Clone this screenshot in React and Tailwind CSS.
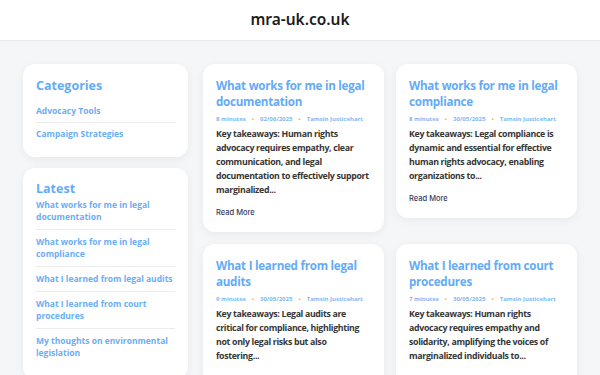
const categories = ['Advocacy Tools', 'Campaign Strategies']

const latest = [
  'What works for me in legal documentation',
  'What works for me in legal compliance',
  'What I learned from legal audits',
  'What I learned from court procedures',
  'My thoughts on environmental legislation',
]

const posts = [
  {
    title: 'What works for me in legal documentation',
    time: '8 minutes',
    date: '02/06/2025',
    excerpt:
      'Key takeaways: Human rights advocacy requires empathy, clear communication, and legal documentation to effectively support marginalized...',
  },
  {
    title: 'What works for me in legal compliance',
    time: '8 minutes',
    date: '30/05/2025',
    excerpt:
      'Key takeaways: Legal compliance is dynamic and essential for effective human rights advocacy, enabling organizations to...',
  },
  {
    title: 'What I learned from legal audits',
    time: '9 minutes',
    date: '30/05/2025',
    excerpt:
      'Key takeaways: Legal audits are critical for compliance, highlighting not only legal risks but also fostering...',
  },
  {
    title: 'What I learned from court procedures',
    time: '7 minutes',
    date: '30/05/2025',
    excerpt:
      'Key takeaways: Human rights advocacy requires empathy and solidarity, amplifying the voices of marginalized individuals to...',
  },
]

function PostCard({ post }) {
  return (
    <article className="bg-white rounded-[12px] shadow-[0_2px_10px_rgba(0,0,0,0.06)] px-[13px] pt-[14px] pb-[14px]">
      <h2 className="text-[11.6px] leading-[16px] font-bold tracking-[-0.25px] text-[#64abf7]">{post.title}</h2>
      <div className="mt-[5px] flex items-center gap-[6px] whitespace-nowrap text-[6px] font-bold text-[#7fb8f5]">
        <span>{post.time}</span>
        <span className="text-[#f5b942]">•</span>
        <span>{post.date}</span>
        <span className="text-[#f5b942]">•</span>
        <span>Tamsin Justicehart</span>
      </div>
      <p className="mt-[3px] text-[8.8px] leading-[14px] font-bold tracking-[-0.33px] text-[#363636]">{post.excerpt}</p>
      <a className="block mt-[10px] text-[7.5px] font-medium text-[#3a3a5e] font-['Inter',sans-serif]">Read More</a>
    </article>
  )
}

export default function App() {
  return (
    <div className="min-h-screen bg-[#f5f6f8] font-['Open_Sans',sans-serif]">
      <header className="h-[41px] bg-white border-b border-[#e8e9ec] flex items-center justify-center">
        <h1 className="text-[15.5px] font-semibold text-[#1c1c1c] font-['Noto_Sans',sans-serif]">mra-uk.co.uk</h1>
      </header>

      <div className="flex items-start gap-[15px] px-[23px] pt-[23px]">
        <aside className="w-[165px] shrink-0 flex flex-col gap-[11px]">
          <div className="bg-white rounded-[12px] shadow-[0_2px_10px_rgba(0,0,0,0.06)] px-[13px] pt-[14px] pb-[12px]">
            <h3 className="text-[12.5px] font-bold text-[#64abf7] leading-[16px]">Categories</h3>
            <ul className="mt-[6px]">
              {categories.map((c, i) => (
                <li key={c} className={`text-[8.5px] font-bold text-[#6aaef5] leading-[12px] py-[5px] ${i < categories.length - 1 ? 'border-b border-[#ececef]' : ''}`}>
                  {c}
                </li>
              ))}
            </ul>
          </div>

          <div className="bg-white rounded-[12px] shadow-[0_2px_10px_rgba(0,0,0,0.06)] px-[13px] pt-[13px] pb-[14px]">
            <h3 className="text-[12.5px] font-bold text-[#64abf7] leading-[16px]">Latest</h3>
            <ul>
              {latest.map((t, i) => (
                <li key={t} className={`text-[8.5px] font-bold text-[#6aaef5] leading-[12px] py-[6px] ${i === 0 ? 'pt-[2px]' : ''} ${i < latest.length - 1 ? 'border-b border-[#ececef]' : ''}`}>
                  {t}
                </li>
              ))}
            </ul>
          </div>
        </aside>

        <main className="flex-1 grid grid-cols-2 gap-[12px] items-start">
          {posts.map((p) => (
            <PostCard key={p.title} post={p} />
          ))}
        </main>
      </div>
    </div>
  )
}
